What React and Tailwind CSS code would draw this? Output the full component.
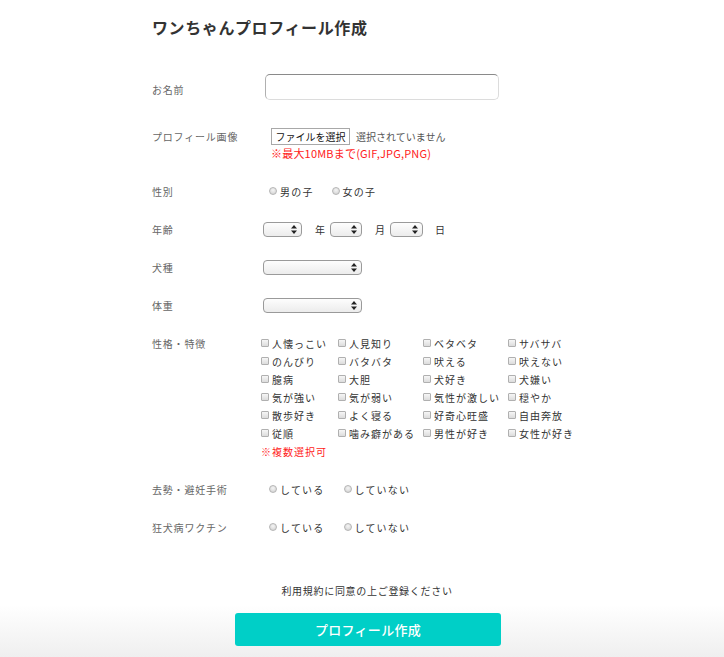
import React from "react";

const F = { fontFamily: '"Noto Sans CJK JP", "Noto Sans", sans-serif' };

function Sel({ w }) {
  return (
    <span
      className={`relative inline-flex h-[15px] items-center justify-end rounded-[4px] border border-[#9a9a9a] bg-[linear-gradient(to_bottom,#fdfdfd,#ececec)] pr-[4px] ${w}`}
    >
      <svg width="6" height="9" viewBox="0 0 6 9">
        <polygon points="3,0 6,3.6 0,3.6" fill="#222" />
        <polygon points="3,9 6,5.4 0,5.4" fill="#222" />
      </svg>
    </span>
  );
}

function Radio({ label, className = "" }) {
  return (
    <span className={`inline-flex items-center ${className}`}>
      <span className="mr-[3px] inline-block h-[8px] w-[8px] rounded-full border border-[#b5b5b5] bg-[radial-gradient(circle_at_50%_35%,#f4f4f4,#cfcfcf)]" />
      <span className="text-[10px] tracking-[1.2px] text-[#333]">{label}</span>
    </span>
  );
}

function Check({ label }) {
  return (
    <span className="inline-flex h-[18px] items-center">
      <span className="mr-[3px] inline-block h-[8px] w-[8px] rounded-[1px] border border-[#b0b0b0] bg-[linear-gradient(to_bottom,#f6f6f6,#dcdcdc)]" />
      <span className="whitespace-nowrap text-[10px] tracking-[1px] text-[#333]">{label}</span>
    </span>
  );
}

function Label({ children }) {
  return (
    <div className="w-[108px] shrink-0 text-[10px] tracking-[0.8px] text-[#666]">{children}</div>
  );
}

const traits = [
  "人懐っこい", "人見知り", "ベタベタ", "サバサバ",
  "のんびり", "バタバタ", "吠える", "吠えない",
  "臆病", "大胆", "犬好き", "犬嫌い",
  "気が強い", "気が弱い", "気性が激しい", "穏やか",
  "散歩好き", "よく寝る", "好奇心旺盛", "自由奔放",
  "従順", "噛み癖がある", "男性が好き", "女性が好き",
];

export default function App() {
  return (
    <div
      style={F}
      className="h-[657px] w-full overflow-hidden bg-[linear-gradient(to_bottom,#ffffff_0px,#ffffff_605px,#efefef_657px)]"
    >
      <div className="ml-[152px] w-[440px]">
        <div className="flex h-[54px] items-center text-[16px] font-bold tracking-[0.6px] text-[#333]">
          ワンちゃんプロフィール作成
        </div>

        <div className="mt-[20px] flex h-[26px] items-center">
          <Label><span className="relative top-[2px]">お名前</span></Label>
          <div className="pl-[5px]">
            <div className="h-[26px] w-[234px] rounded-[5px] border border-[#dcdcdc] border-t-[#8a8a8a] border-l-[#b0b0b0] bg-white" />
          </div>
        </div>

        <div className="mt-[28px] flex">
          <Label><div className="pt-[1px]">プロフィール画像</div></Label>
          <div className="pl-[11px]">
            <div className="flex h-[17px] items-center">
              <span className="flex h-[17px] w-[79px] items-center justify-center border border-[#a8a8a8] bg-white text-[10px] text-[#111]">
                ファイルを選択
              </span>
              <span className="ml-[6px] text-[10px] text-[#555]">選択されていません</span>
            </div>
            <div className="flex h-[17px] items-center text-[11px] tracking-[0.2px] text-[#ff1a1a]">
              ※最大10MBまで(GIF,JPG,PNG)
            </div>
          </div>
        </div>

        <div className="mt-[20px] flex h-[18px] items-center">
          <Label>性別</Label>
          <div className="flex pl-[9px]">
            <Radio label="男の子" />
            <Radio label="女の子" className="ml-[18px]" />
          </div>
        </div>

        <div className="mt-[20px] flex h-[18px] items-center">
          <Label>年齢</Label>
          <div className="flex items-center pl-[3px] text-[10px] text-[#333]">
            <Sel w="w-[39px]" />
            <span className="ml-[13px] mr-[5px]">年</span>
            <Sel w="w-[32px]" />
            <span className="ml-[13px] mr-[5px]">月</span>
            <Sel w="w-[33px]" />
            <span className="ml-[12px]">日</span>
          </div>
        </div>

        <div className="mt-[20px] flex h-[18px] items-center">
          <Label>犬種</Label>
          <div className="flex pl-[3px]"><Sel w="w-[99px]" /></div>
        </div>

        <div className="mt-[20px] flex h-[18px] items-center">
          <Label>体重</Label>
          <div className="flex pl-[3px]"><Sel w="w-[99px]" /></div>
        </div>

        <div className="mt-[20px] flex">
          <Label><div className="flex h-[18px] items-center">性格・特徴</div></Label>
          <div className="pl-[1px]">
            <div className="grid grid-cols-[77px_85px_85px_85px]">
              {traits.map((t) => (
                <Check key={t} label={t} />
              ))}
            </div>
            <div className="flex h-[18px] items-center text-[10px] tracking-[1px] text-[#ff1a1a]">
              ※複数選択可
            </div>
          </div>
        </div>

        <div className="mt-[20px] flex h-[18px] items-center">
          <Label>去勢・避妊手術</Label>
          <div className="flex pl-[9px]">
            <Radio label="している" />
            <Radio label="していない" className="ml-[19px]" />
          </div>
        </div>

        <div className="mt-[20px] flex h-[18px] items-center">
          <Label>狂犬病ワクチン</Label>
          <div className="flex pl-[9px]">
            <Radio label="している" />
            <Radio label="していない" className="ml-[19px]" />
          </div>
        </div>
      </div>

      <div className="mt-[45px] flex h-[18px] items-center justify-center pl-[10px] text-[10px] tracking-[0.7px] text-[#333]">
        利用規約に同意の上ご登録ください
      </div>
      <div className="mt-[14px] flex justify-center pl-[12px]">
        <div className="flex h-[33px] w-[266px] items-center justify-center rounded-[3px] bg-[#00cfc7] text-[13px] font-medium tracking-[0.3px] text-white">
          プロフィール作成
        </div>
      </div>
    </div>
  );
}
